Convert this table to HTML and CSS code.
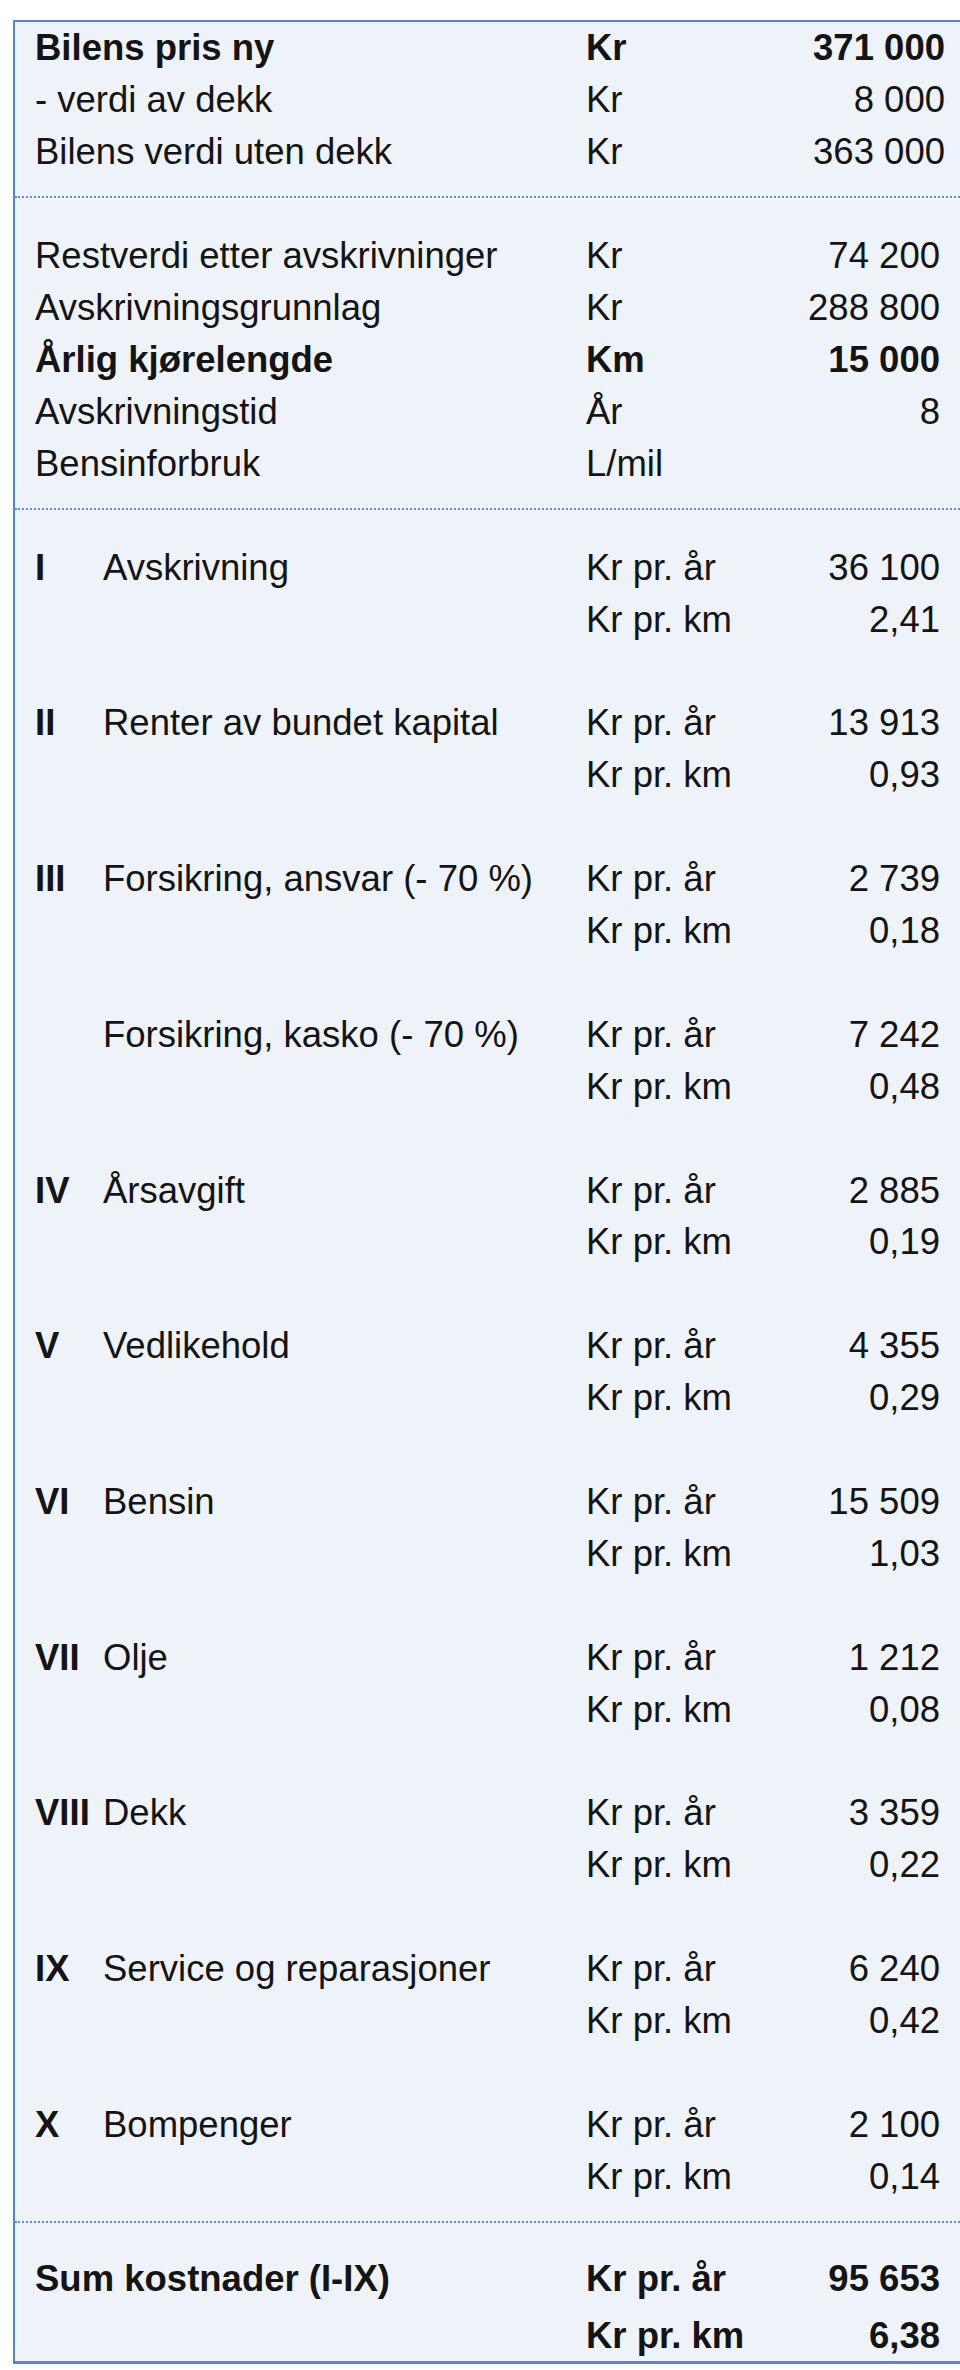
FILE: index.html
```html
<!DOCTYPE html>
<html lang="no">
<head>
<meta charset="utf-8">
<title>Bilkostnader</title>
<link rel="stylesheet" href="styles.css">
</head>
<body>
<div class="sheet">
  <section class="block block-first">
    <div class="row wide bold"><span class="label">Bilens pris ny</span><span class="unit">Kr</span><span class="value">371 000</span></div>
    <div class="row wide"><span class="label">- verdi av dekk</span><span class="unit">Kr</span><span class="value">8 000</span></div>
    <div class="row wide"><span class="label">Bilens verdi uten dekk</span><span class="unit">Kr</span><span class="value">363 000</span></div>
  </section>

  <section class="block">
    <div class="row"><span class="label">Restverdi etter avskrivninger</span><span class="unit">Kr</span><span class="value">74 200</span></div>
    <div class="row"><span class="label">Avskrivningsgrunnlag</span><span class="unit">Kr</span><span class="value">288 800</span></div>
    <div class="row bold"><span class="label">Årlig kjørelengde</span><span class="unit">Km</span><span class="value">15 000</span></div>
    <div class="row"><span class="label">Avskrivningstid</span><span class="unit">År</span><span class="value">8</span></div>
    <div class="row"><span class="label">Bensinforbruk</span><span class="unit">L/mil</span><span class="value"></span></div>
  </section>

  <section class="block items">
    <div class="item">
      <span class="num">I</span><span class="name">Avskrivning</span><span class="unit">Kr pr. år</span><span class="value">36 100</span>
      <span class="unit km">Kr pr. km</span><span class="value">2,41</span>
    </div>
    <div class="item">
      <span class="num">II</span><span class="name">Renter av bundet kapital</span><span class="unit">Kr pr. år</span><span class="value">13 913</span>
      <span class="unit km">Kr pr. km</span><span class="value">0,93</span>
    </div>
    <div class="item">
      <span class="num">III</span><span class="name">Forsikring, ansvar (- 70 %)</span><span class="unit">Kr pr. år</span><span class="value">2 739</span>
      <span class="unit km">Kr pr. km</span><span class="value">0,18</span>
    </div>
    <div class="item">
      <span class="num"></span><span class="name">Forsikring, kasko (- 70 %)</span><span class="unit">Kr pr. år</span><span class="value">7 242</span>
      <span class="unit km">Kr pr. km</span><span class="value">0,48</span>
    </div>
    <div class="item">
      <span class="num">IV</span><span class="name">Årsavgift</span><span class="unit">Kr pr. år</span><span class="value">2 885</span>
      <span class="unit km">Kr pr. km</span><span class="value">0,19</span>
    </div>
    <div class="item">
      <span class="num">V</span><span class="name">Vedlikehold</span><span class="unit">Kr pr. år</span><span class="value">4 355</span>
      <span class="unit km">Kr pr. km</span><span class="value">0,29</span>
    </div>
    <div class="item">
      <span class="num">VI</span><span class="name">Bensin</span><span class="unit">Kr pr. år</span><span class="value">15 509</span>
      <span class="unit km">Kr pr. km</span><span class="value">1,03</span>
    </div>
    <div class="item">
      <span class="num">VII</span><span class="name">Olje</span><span class="unit">Kr pr. år</span><span class="value">1 212</span>
      <span class="unit km">Kr pr. km</span><span class="value">0,08</span>
    </div>
    <div class="item">
      <span class="num">VIII</span><span class="name">Dekk</span><span class="unit">Kr pr. år</span><span class="value">3 359</span>
      <span class="unit km">Kr pr. km</span><span class="value">0,22</span>
    </div>
    <div class="item">
      <span class="num">IX</span><span class="name">Service og reparasjoner</span><span class="unit">Kr pr. år</span><span class="value">6 240</span>
      <span class="unit km">Kr pr. km</span><span class="value">0,42</span>
    </div>
    <div class="item">
      <span class="num">X</span><span class="name">Bompenger</span><span class="unit">Kr pr. år</span><span class="value">2 100</span>
      <span class="unit km">Kr pr. km</span><span class="value">0,14</span>
    </div>
  </section>

  <section class="block block-sum">
    <div class="sum">
      <span class="label">Sum kostnader (I-IX)</span><span class="unit">Kr pr. år</span><span class="value">95 653</span>
      <span class="unit km">Kr pr. km</span><span class="value">6,38</span>
    </div>
  </section>
</div>
</body>
</html>
```

FILE: styles.css
```css
html, body {
  margin: 0;
  padding: 0;
  background: #ffffff;
}

body {
  font-family: "Liberation Sans", Arial, Helvetica, sans-serif;
  font-size: 36.5px;
  line-height: 51.9px;
  color: #141414;
}

.sheet {
  margin: 20px 0 0 13px;
  background: #eef2f9;
  border-top: 2px solid #5688c7;
  border-left: 2px solid #5688c7;
  border-bottom: 3px solid #5688c7;
  box-sizing: border-box;
  width: 947px;
}

.block {
  padding: 32px 0 18px 20px;
  border-top: 2px dotted #5f91d0;
}

.block-first {
  padding-top: 0;
  padding-bottom: 18.5px;
  border-top: none;
}

.row {
  display: grid;
  grid-template-columns: 551px 200px 154px;
  white-space: nowrap;
}

.row.wide {
  grid-template-columns: 551px 200px 159px;
}

.bold {
  font-weight: bold;
}

.value {
  text-align: right;
}

.items {
  display: flex;
  flex-direction: column;
  gap: 51.9px;
  padding-top: 32px;
}

.item {
  display: grid;
  grid-template-columns: 68px 483px 200px 154px;
  white-space: nowrap;
}

.num {
  font-weight: bold;
}

.item .km {
  grid-column: 3;
}

.block-sum {
  padding-top: 31px;
  padding-bottom: 0;
}

.sum {
  display: grid;
  grid-template-columns: 551px 200px 154px;
  grid-auto-rows: 50px;
  row-gap: 7px;
  line-height: 50px;
  font-weight: bold;
  white-space: nowrap;
}

.sum .km {
  grid-column: 2;
}
```
